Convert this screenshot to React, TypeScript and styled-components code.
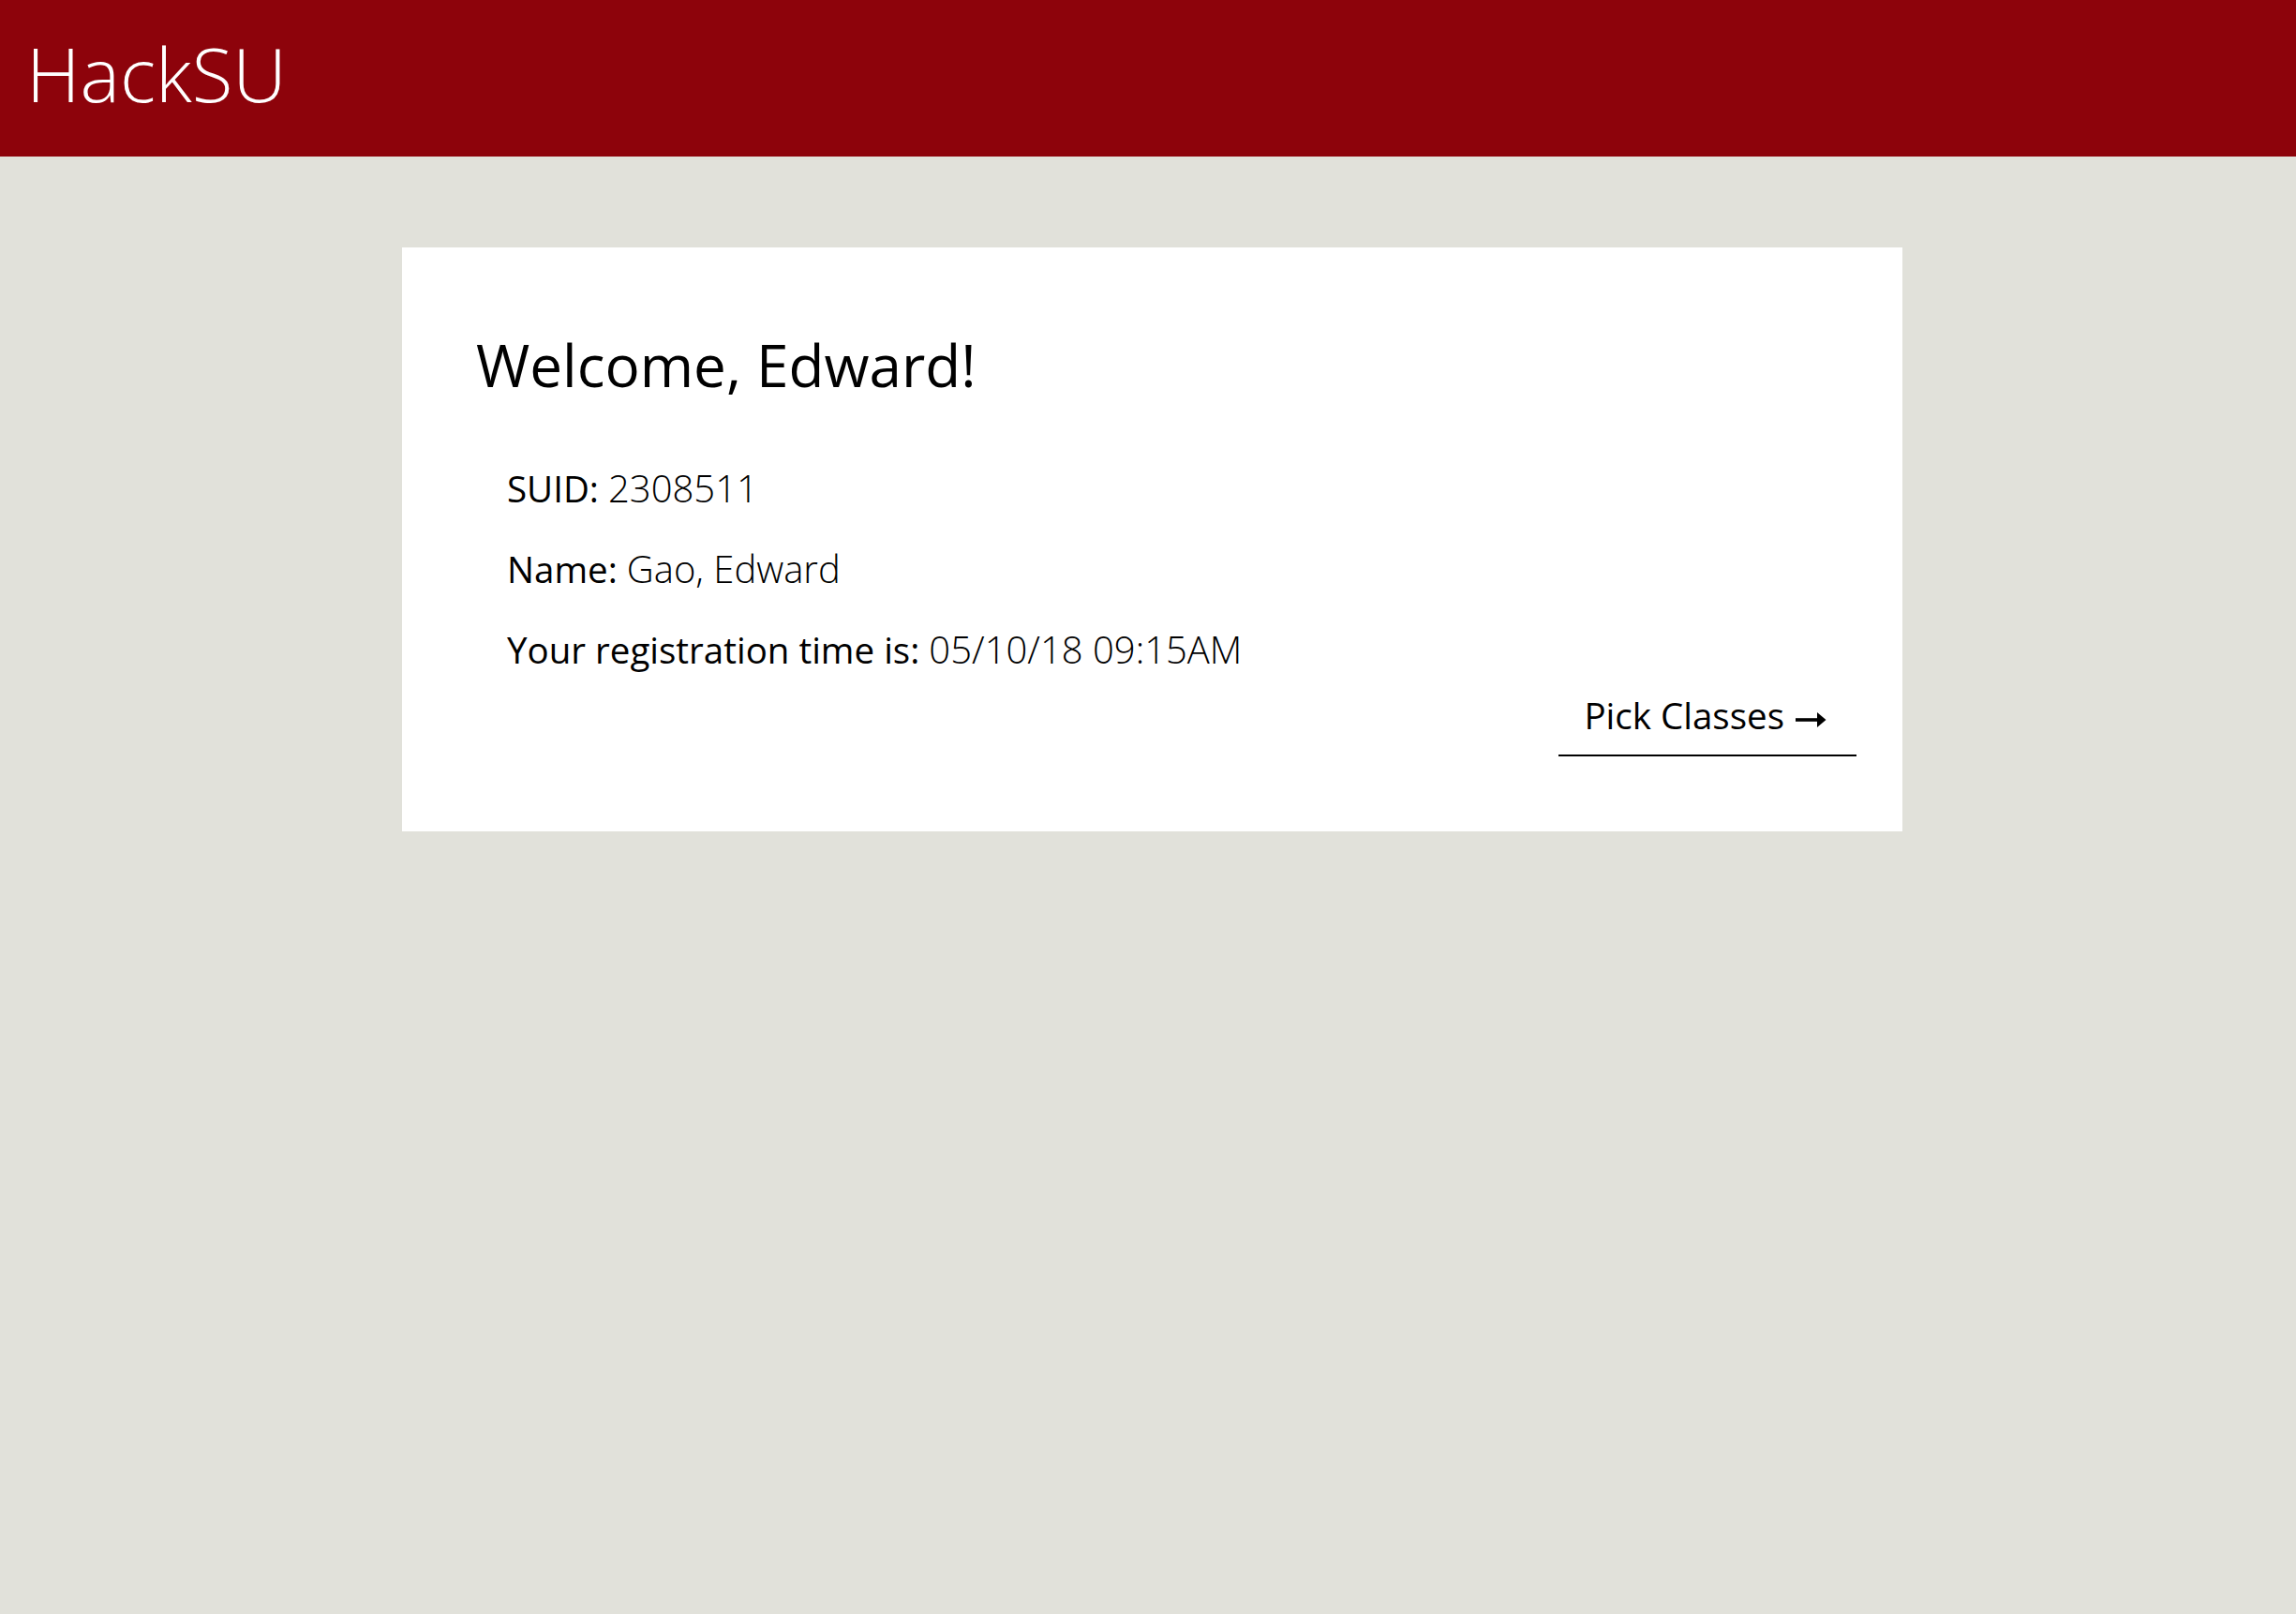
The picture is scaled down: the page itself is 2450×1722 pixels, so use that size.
import React from "react";
import styled, { createGlobalStyle } from "styled-components";

const GlobalStyle = createGlobalStyle`
  body {
    margin: 0;
    background-color: #e1e1da;
    font-family: "Open Sans", "Liberation Sans", sans-serif;
    color: #000;
  }
`;

interface InfoRowProps {
  label: string;
  value: string;
}

const InfoRow: React.FC<InfoRowProps> = ({ label, value }: InfoRowProps) => {
  return (
    <Row>
      <Label>{label}</Label> <Value>{value}</Value>
    </Row>
  );
};

const ArrowIcon = () => (
  <svg width="33" height="18" viewBox="0 0 33 18" aria-hidden="true">
    <rect x="0" y="7.2" width="25" height="3.6" fill="#000" />
    <polygon points="23,1 32.5,9 23,17" fill="#000" />
  </svg>
);

const App: React.FC = () => {
  return (
    <>
      <GlobalStyle />
      <Header>
        <Brand>HackSU</Brand>
      </Header>
      <Main>
        <Card>
          <Welcome>Welcome, Edward!</Welcome>
          <InfoList>
            <InfoRow label="SUID:" value="2308511" />
            <InfoRow label="Name:" value="Gao, Edward" />
            <InfoRow label="Your registration time is:" value="05/10/18 09:15AM" />
          </InfoList>
          <Footer>
            <PickButton>
              Pick Classes
              <ArrowWrap>
                <ArrowIcon />
              </ArrowWrap>
            </PickButton>
          </Footer>
        </Card>
      </Main>
    </>
  );
};

const Header = styled.header`
  height: 167px;
  box-sizing: border-box;
  background-color: #8d030b;
  display: flex;
  align-items: flex-start;
  padding: 38px 28px 0;
`;

const Brand = styled.h1`
  margin: 0;
  font-size: 80px;
  line-height: 1;
  font-weight: 300;
  color: #fff;
`;

const Main = styled.main`
  padding: 97px 0 0 429px;
`;

const Card = styled.section`
  width: 1601px;
  box-sizing: border-box;
  background-color: #fff;
  padding: 88px 49px 80px 79px;
  display: flex;
  flex-direction: column;
`;

const Welcome = styled.h2`
  margin: 0;
  font-size: 62px;
  line-height: 74px;
  font-weight: 400;
`;

const InfoList = styled.div`
  display: flex;
  flex-direction: column;
  gap: 32px;
  margin-top: 68px;
  padding-left: 33px;
`;

const Row = styled.div`
  font-size: 38.5px;
  line-height: 54px;
`;

const Label = styled.span`
  font-weight: 400;
`;

const Value = styled.span`
  font-weight: 300;
  font-size: 40px;
`;

const Footer = styled.div`
  display: flex;
  justify-content: flex-end;
  margin-top: 16px;
`;

const PickButton = styled.button`
  display: inline-flex;
  align-items: baseline;
  gap: 12px;
  background-color: transparent;
  border: none;
  border-bottom: 2px solid #000;
  font-family: inherit;
  font-size: 38.5px;
  line-height: 54px;
  font-weight: 400;
  color: #000;
  padding: 0 32px 15px 27px;
  cursor: pointer;
`;

const ArrowWrap = styled.span`
  display: inline-flex;
  position: relative;
  top: -1px;
`;

export default App;
